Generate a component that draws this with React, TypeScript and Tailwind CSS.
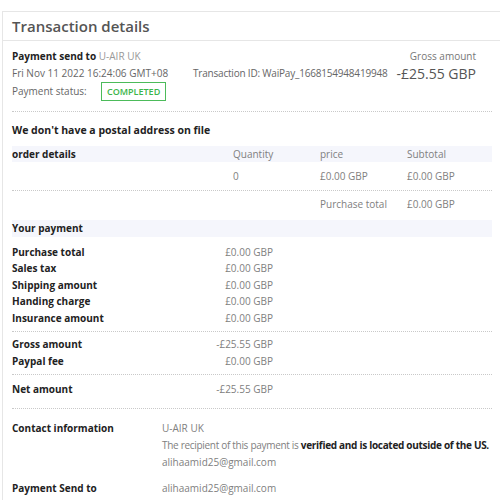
const orderRows = [
  { qty: "0", price: "£0.00 GBP", subtotal: "£0.00 GBP" },
];

const paymentRows = [
  { label: "Purchase total", value: "£0.00 GBP" },
  { label: "Sales tax", value: "£0.00 GBP" },
  { label: "Shipping amount", value: "£0.00 GBP" },
  { label: "Handing charge", value: "£0.00 GBP" },
  { label: "Insurance amount", value: "£0.00 GBP" },
];

const feeRows = [
  { label: "Gross amount", value: "-£25.55 GBP" },
  { label: "Paypal fee", value: "£0.00 GBP" },
];

function Divider() {
  return <div className="border-t border-dotted border-[#c9c9c9]" />;
}

function AmountRow({ label, value }: { label: string; value: string }) {
  return (
    <div className="flex h-[16.5px] w-[261px] items-center justify-between">
      <span className="font-bold text-[#222]">{label}</span>
      <span className="text-[#808080]">{value}</span>
    </div>
  );
}

export default function App() {
  return (
    <div
      className="h-[500px] w-[500px] overflow-hidden whitespace-nowrap bg-white pl-[2px] pt-[11px] text-[10px] text-[#333]"
      style={{ fontFamily: '"Open Sans", "Noto Sans", sans-serif' }}
    >
      <div className="h-[520px] border-l border-t border-[#e6e6e6]">
        {/* header */}
        <div className="flex h-[29px] items-center border-b border-[#e6e6e6] pl-[9px]">
          <h1 className="text-[15px] font-semibold text-[#555]">Transaction details</h1>
        </div>

        <div className="pl-[9px] pr-[8px]">
          {/* summary */}
          <div className="pt-[7px]">
            <div className="flex h-[16px] items-center justify-between pr-[16px]">
              <p>
                <span className="font-bold text-[#222]">Payment send to</span>{" "}
                <span className="text-[#999]">U-AIR UK</span>
              </p>
              <span className="text-[#777]">Gross amount</span>
            </div>
            <div className="flex h-[18px] items-center pr-[16px] text-[#666]">
              <span className="w-[181px] shrink-0">Fri Nov 11 2022 16:24:06 GMT+08</span>
              <span className="tracking-[-0.2px]">Transaction ID: WaiPay_1668154948419948</span>
              <span className="ml-auto text-[14px] text-[#555]">-£25.55 GBP</span>
            </div>
            <div className="flex h-[19px] items-center text-[#666]">
              <span className="w-[89px]">Payment status:</span>
              <span className="flex h-[19px] items-center border border-[#4cbb5a] px-[5px] text-[9px] font-semibold text-[#3bb54a]">
                COMPLETED
              </span>
            </div>
          </div>

          <div className="mt-[10px]">
            <Divider />
          </div>

          {/* order details */}
          <div className="flex h-[34px] items-center pt-[4px] text-[10.5px] font-bold text-[#222]">
            We don't have a postal address on file
          </div>
          <div className="grid h-[16px] grid-cols-[221px_87px_87px_1fr] items-center bg-[#f5f6fc] text-[#808080]">
            <span className="font-bold text-[#222]">order details</span>
            <span>Quantity</span>
            <span>price</span>
            <span>Subtotal</span>
          </div>
          {orderRows.map((row, i) => (
            <div key={i} className="grid h-[28px] grid-cols-[221px_87px_87px_1fr] items-center text-[#808080]">
              <span />
              <span>{row.qty}</span>
              <span>{row.price}</span>
              <span>{row.subtotal}</span>
            </div>
          ))}
          <Divider />
          <div className="grid h-[29px] grid-cols-[221px_87px_87px_1fr] items-center pb-[2px] text-[#808080]">
            <span />
            <span />
            <span>Purchase total</span>
            <span>£0.00 GBP</span>
          </div>

          {/* your payment */}
          <div className="flex h-[17px] items-center bg-[#f5f6fc] font-bold text-[#222]">Your payment</div>
          <div className="pb-[4px] pt-[7px]">
            {paymentRows.map((row) => (
              <AmountRow key={row.label} {...row} />
            ))}
          </div>
          <Divider />
          <div className="pb-[4px] pt-[5px]">
            {feeRows.map((row) => (
              <AmountRow key={row.label} {...row} />
            ))}
          </div>
          <Divider />
          <div className="pb-[3px] pt-[7px]">
            <AmountRow label="Net amount" value="-£25.55 GBP" />
          </div>
          <div className="mt-[7px]">
            <Divider />
          </div>

          {/* contact */}
          <div className="flex pt-[11px]">
            <span className="w-[150px] shrink-0 font-bold leading-[17px] text-[#222]">Contact information</span>
            <div className="leading-[17px] text-[#808080]">
              <p>U-AIR UK</p>
              <p className="tracking-[-0.3px]">
                The recipient of this payment is{" "}
                <span className="font-bold text-[#222]">verified and is located outside of the US.</span>
              </p>
              <p>alihaamid25@gmail.com</p>
            </div>
          </div>
          <div className="flex pt-[9px]">
            <span className="w-[150px] shrink-0 font-bold leading-[17px] text-[#222]">Payment Send to</span>
            <span className="leading-[17px] text-[#808080]">alihaamid25@gmail.com</span>
          </div>
        </div>
      </div>
    </div>
  );
}
